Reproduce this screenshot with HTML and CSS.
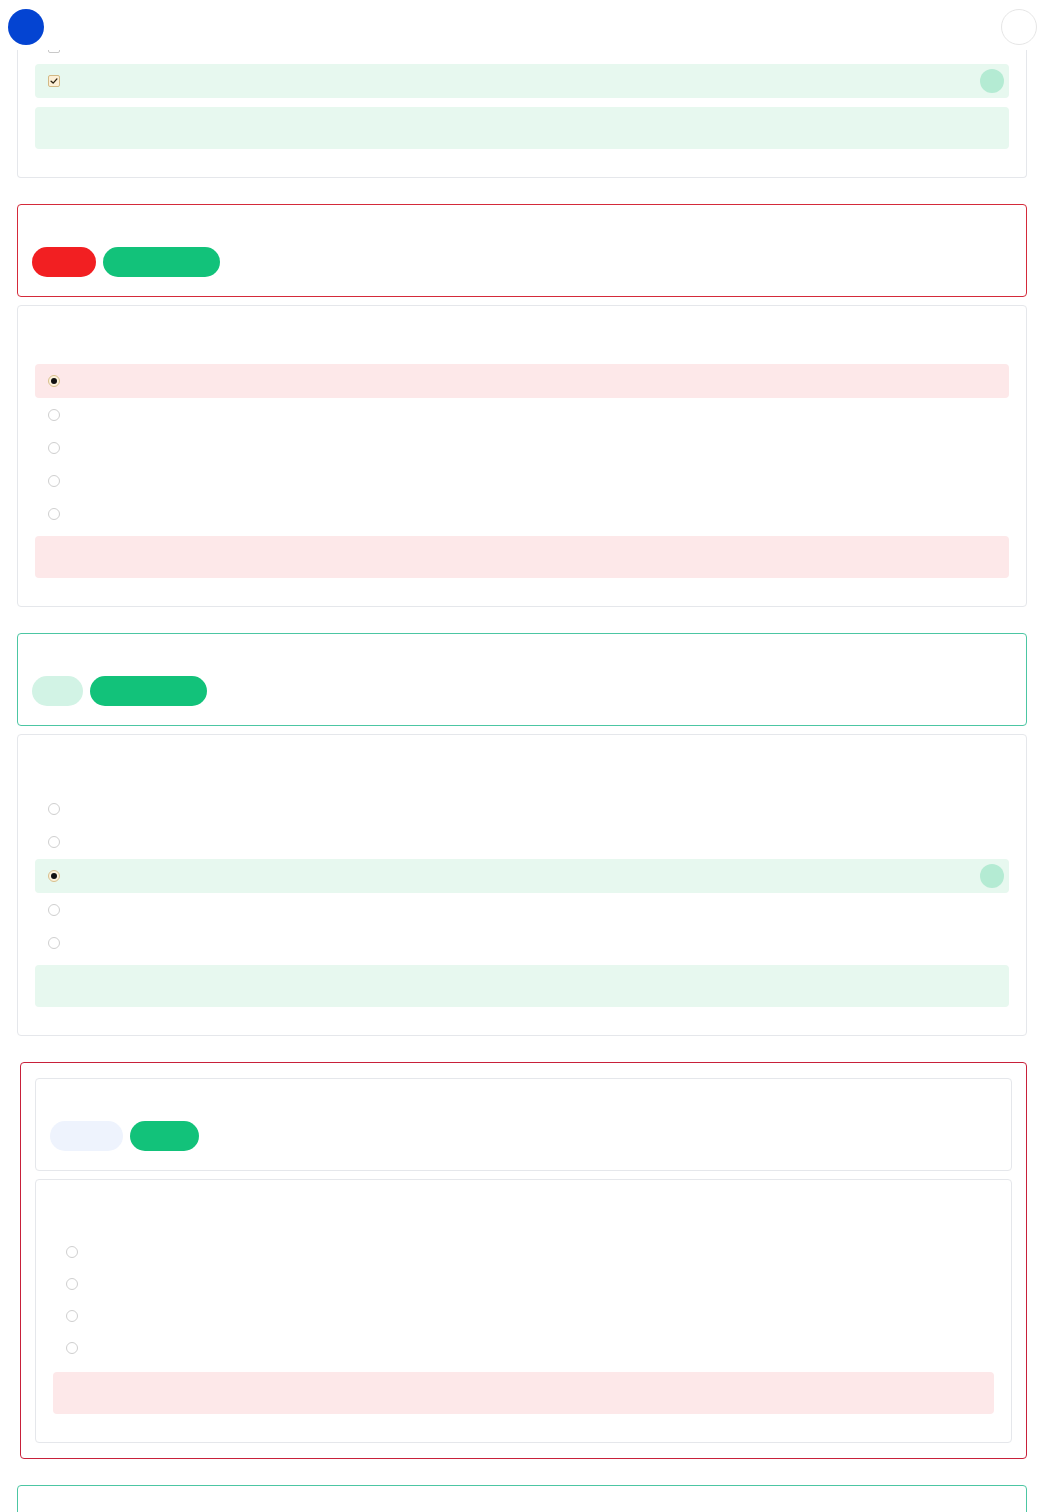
FILE: index.html
```html
<!DOCTYPE html>
<html lang="en">
<head>
    <meta charset="UTF-8">
    <meta name="viewport" content="width=device-width, initial-scale=1.0">
    <title>Quiz review</title>
    <link rel="stylesheet" href="styles.css">
</head>
<body>
    <header class="topbar">
        <span class="avatar"></span>
        <span class="menu-dot"></span>
    </header>

    <main class="review">
        <!-- Вопрос с чекбоксами (верх обрезан шапкой) -->
        <section class="question-card first">
            <div class="options">
                <div class="option">
                    <span class="box"></span>
                </div>
                <div class="option correct">
                    <span class="box checked">
                        <svg viewBox="0 0 12 12" width="10" height="10"><path d="M2.5 6.2 L5 8.5 L9.5 3.5" fill="none" stroke="#2b2111" stroke-width="1.6" stroke-linecap="round" stroke-linejoin="round"/></svg>
                    </span>
                    <span class="mark"></span>
                </div>
            </div>
            <div class="feedback good"></div>
        </section>

        <!-- Вопрос 2: неверно -->
        <section class="result-card wrong">
            <div class="result-title"></div>
            <div class="pills">
                <span class="pill red" style="width: 64px"></span>
                <span class="pill green" style="width: 117px"></span>
            </div>
        </section>
        <section class="question-card">
            <div class="question-title"></div>
            <div class="options">
                <div class="option incorrect"><span class="radio selected"></span></div>
                <div class="option"><span class="radio"></span></div>
                <div class="option"><span class="radio"></span></div>
                <div class="option"><span class="radio"></span></div>
                <div class="option"><span class="radio"></span></div>
            </div>
            <div class="feedback bad"></div>
        </section>

        <!-- Вопрос 3: верно -->
        <section class="result-card right">
            <div class="result-title"></div>
            <div class="pills">
                <span class="pill mint" style="width: 51px"></span>
                <span class="pill green" style="width: 117px"></span>
            </div>
        </section>
        <section class="question-card">
            <div class="question-title"></div>
            <div class="options">
                <div class="option"><span class="radio"></span></div>
                <div class="option"><span class="radio"></span></div>
                <div class="option correct"><span class="radio selected"></span><span class="mark"></span></div>
                <div class="option"><span class="radio"></span></div>
                <div class="option"><span class="radio"></span></div>
            </div>
            <div class="feedback good"></div>
        </section>

        <!-- Вопрос 4: пропущен -->
        <div class="group wrong">
            <section class="result-card">
                <div class="result-title"></div>
                <div class="pills">
                    <span class="pill blue" style="width: 73px"></span>
                    <span class="pill green" style="width: 69px"></span>
                </div>
            </section>
            <section class="question-card">
                <div class="question-title"></div>
                <div class="options">
                    <div class="option"><span class="radio"></span></div>
                    <div class="option"><span class="radio"></span></div>
                    <div class="option"><span class="radio"></span></div>
                    <div class="option"><span class="radio"></span></div>
                </div>
                <div class="feedback bad"></div>
            </section>
        </div>

        <!-- Вопрос 5 -->
        <section class="result-card right">
            <div class="result-title"></div>
            <div class="pills">
                <span class="pill mint" style="width: 51px"></span>
                <span class="pill green" style="width: 117px"></span>
            </div>
        </section>
    </main>
</body>
</html>
```

FILE: styles.css
```css
/* Общий стиль */
body {
    margin: 0;
    padding: 0;
    background: #fff;
    font-family: 'Inter', 'Liberation Sans', sans-serif;
    color: #111827;
}

/* Шапка */
.topbar {
    position: fixed;
    top: 0;
    left: 0;
    right: 0;
    height: 50px;
    background: #fff;
    z-index: 10;
}

.avatar {
    position: absolute;
    top: 9px;
    left: 8px;
    width: 36px;
    height: 36px;
    border-radius: 50%;
    background: #0444d2;
}

.menu-dot {
    position: absolute;
    top: 9px;
    right: 7px;
    width: 34px;
    height: 34px;
    border-radius: 50%;
    border: 1px solid #e6e6e6;
    background: #fff;
}

/* Список вопросов */
.review {
    display: flex;
    flex-direction: column;
    padding: 0 17px 40px;
}

.result-card {
    border: 1px solid #e5e7eb;
    border-radius: 4px;
    padding: 14px 14px 18px;
    height: 59px;
    margin-top: 26px;
}

.result-card.wrong {
    border-color: #d42a3a;
}

.result-card.right {
    border-color: #4cc6a3;
}

.result-title {
    height: 28px;
}

.pills {
    display: flex;
    gap: 7px;
}

.pill {
    display: block;
    height: 30px;
    border-radius: 15px;
}

.pill.red { background: #f21f22; }
.pill.green { background: #12c27a; }
.pill.mint { background: #d2f3e5; }
.pill.blue { background: #eef3fd; }

/* Карточка вопроса */
.question-card {
    border: 1px solid #e5e7eb;
    border-radius: 4px;
    padding: 17px 17px 28px;
    margin-top: 8px;
}

.question-card.first {
    margin-top: 0;
    padding-top: 30px;
    border-top-color: transparent;
}

.question-card.first .feedback {
    margin-top: 9px;
}

.question-title {
    height: 41px;
}

.options {
    display: flex;
    flex-direction: column;
    gap: 1px;
}

.option {
    display: flex;
    align-items: center;
    height: 32px;
    padding: 0 5px 0 13px;
    border-radius: 4px;
}

.option.correct {
    height: 34px;
    background: #e7f8ef;
}

.option.incorrect {
    height: 34px;
    background: #fde8e9;
}

.mark {
    margin-left: auto;
    width: 24px;
    height: 24px;
    border-radius: 50%;
    background: #b4ebd3;
}

.box {
    display: flex;
    align-items: center;
    justify-content: center;
    box-sizing: border-box;
    width: 12px;
    height: 12px;
    border: 1px solid #c9c9c9;
    border-radius: 2px;
    background: #fff;
}

.box.checked {
    border-color: #d3b985;
    background: #fcefd6;
}

.radio {
    display: flex;
    align-items: center;
    justify-content: center;
    box-sizing: border-box;
    width: 12px;
    height: 12px;
    border: 1px solid #cfcfcf;
    border-radius: 50%;
    background: #fff;
}

.radio.selected {
    border-color: #d8bf8c;
    background: #fcf2dc;
}

.radio.selected::after {
    content: "";
    width: 6px;
    height: 6px;
    border-radius: 50%;
    background: #111;
}

.feedback {
    height: 42px;
    margin-top: 6px;
    border-radius: 4px;
}

.feedback.good { background: #e7f8ef; }
.feedback.bad { background: #fde8e9; }

/* Обёртка пропущенного вопроса */
.group {
    margin: 26px 0 0 3px;
    padding: 15px 14px;
    border: 1px solid #c8203a;
    border-radius: 4px;
}

.group .result-card {
    margin-top: 0;
}

.group .question-title {
    height: 39px;
}

.group .options {
    gap: 0;
}

.group .feedback {
    margin-top: 8px;
}
```
